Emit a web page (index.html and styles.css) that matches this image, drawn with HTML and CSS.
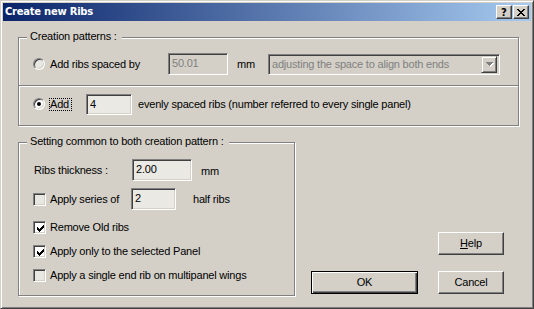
FILE: index.html
```html
<!DOCTYPE html>
<html>
<head>
<meta charset="utf-8">
<link rel="stylesheet" href="styles.css">
</head>
<body>
<div class="window">
  <div class="titlebar">
    <span class="title">Create new Ribs</span>
    <span class="cbtn help-cb">?</span>
    <span class="cbtn close-cb">
      <svg width="8" height="7" viewBox="0 0 8 7" shape-rendering="crispEdges"><path d="M0 0h2v1h-2z M6 0h2v1h-2z M1 1h2v1h-2z M5 1h2v1h-2z M2 2h4v1h-4z M3 3h2v1h-2z M2 4h4v1h-4z M1 5h2v1h-2z M5 5h2v1h-2z M0 6h2v1h-2z M6 6h2v1h-2z" fill="#000"/></svg>
    </span>
  </div>
  <div class="body">
    <div class="group g1">
      <div class="legend">Creation patterns :</div>
      <div class="row r1">
        <span class="radio"></span>
        <span class="lbl lbl-spaced">Add ribs spaced by</span>
        <span class="edit disabled e-spacing">50.01</span>
        <span class="lbl mm1">mm</span>
        <span class="combo">
          <span class="combo-text">adjusting the space to align both ends</span>
          <span class="drop">
            <svg width="8" height="5" viewBox="0 0 8 5" shape-rendering="crispEdges"><path d="M1 1h7v1h-7z M2 2h5v1h-5z M3 3h3v1h-3z M4 4h1v1h-1z" fill="#fff"/><path d="M0 0h7v1h-7z M1 1h5v1h-5z M2 2h3v1h-3z M3 3h1v1h-1z" fill="#808080"/></svg>
          </span>
        </span>
      </div>
      <div class="sep"></div>
      <div class="row r2">
        <span class="radio on"><span class="dot"></span></span>
        <span class="focus">Add</span>
        <span class="edit e-count">4</span>
        <span class="lbl evenly">evenly spaced ribs (number referred to every single panel)</span>
      </div>
    </div>
    <div class="lower">
      <div class="group g2">
        <div class="legend">Setting common to both creation pattern :</div>
        <div class="row rt">
          <span class="lbl lbl-thick">Ribs thickness :</span>
          <span class="edit e-thick">2.00</span>
          <span class="lbl mm2">mm</span>
        </div>
        <div class="row rs">
          <span class="check"></span>
          <span class="lbl lbl-series">Apply series of</span>
          <span class="edit e-series">2</span>
          <span class="lbl half">half ribs</span>
        </div>
        <div class="row ck first">
          <span class="check on"><svg width="7" height="7" viewBox="0 0 7 7" shape-rendering="crispEdges"><path d="M6 0h1v1h-1z M5 1h2v1h-2z M0 2h1v1h-1z M4 2h3v1h-3z M0 3h2v1h-2z M3 3h3v1h-3z M0 4h5v1h-5z M1 5h3v1h-3z M2 6h1v1h-1z" fill="#000"/></svg></span>
          <span class="lbl">Remove Old ribs</span>
        </div>
        <div class="row ck">
          <span class="check on"><svg width="7" height="7" viewBox="0 0 7 7" shape-rendering="crispEdges"><path d="M6 0h1v1h-1z M5 1h2v1h-2z M0 2h1v1h-1z M4 2h3v1h-3z M0 3h2v1h-2z M3 3h3v1h-3z M0 4h5v1h-5z M1 5h3v1h-3z M2 6h1v1h-1z" fill="#000"/></svg></span>
          <span class="lbl">Apply only to the selected Panel</span>
        </div>
        <div class="row ck">
          <span class="check"></span>
          <span class="lbl">Apply a single end rib on multipanel wings</span>
        </div>
      </div>
      <div class="btns">
        <span class="btn btn-help"><u>H</u>elp</span>
        <span class="btn btn-ok default">OK</span>
        <span class="btn btn-cancel">Cancel</span>
      </div>
    </div>
  </div>
</div>
</body>
</html>
```
FILE: styles.css
```css
* { box-sizing: border-box; }
html, body { margin: 0; padding: 0; }
body {
  width: 534px;
  height: 309px;
  overflow: hidden;
  background: #d4d0c8;
  font-family: "Liberation Sans", Arial, sans-serif;
  font-size: 11px;
  letter-spacing: -0.2px;
  color: #000;
}

.window {
  width: 534px;
  height: 309px;
  background: #d4d0c8;
  border: 1px solid;
  border-color: #d4d0c8 #404040 #404040 #d4d0c8;
  padding: 2px;
  box-shadow: inset 1px 1px #fff, inset -1px -1px #808080;
}

.titlebar {
  height: 18px;
  display: flex;
  align-items: center;
  padding: 0 2px 0 2px;
  background: linear-gradient(90deg, #0a246a 0%, #a6caf0 100%);
}
.title {
  flex: 1;
  color: #fff;
  font-family: "DejaVu Sans", Tahoma, sans-serif;
  font-weight: bold;
  font-size: 10px;
  letter-spacing: -0.25px;
  line-height: 18px;
}
.cbtn {
  width: 16px;
  height: 14px;
  flex: none;
  display: flex;
  align-items: center;
  justify-content: center;
  background: #d4d0c8;
  border: 1px solid;
  border-color: #fff #404040 #404040 #fff;
  box-shadow: inset -1px -1px #808080;
}
.help-cb {
  margin-right: 1px;
  font-family: "DejaVu Sans", sans-serif;
  font-weight: bold;
  font-size: 10px;
  letter-spacing: 0;
  line-height: 12px;
  padding-top: 1px;
}
.close-cb svg { display: block; }

.body { padding: 16px 0 0 15px; }

.group {
  border: 1px solid #808080;
  box-shadow: inset 1px 1px #fff, 1px 1px #fff;
}
.legend {
  display: table;
  margin: -8px 0 0 8px;
  padding: 0 5px 0 3px;
  height: 13px;
  line-height: 13px;
  background: #d4d0c8;
}

.g1 { width: 501px; height: 89px; }
.row { display: flex; align-items: center; }
.lbl { white-space: nowrap; flex: none; line-height: 13px; }

.r1 { height: 42px; padding-left: 14px; }
.r2 { height: 34px; padding-left: 14px; }
.sep {
  height: 2px;
  border-top: 1px solid #808080;
  border-bottom: 1px solid #fff;
}

.radio {
  width: 12px;
  height: 12px;
  flex: none;
  border-radius: 50%;
  border: 1px solid;
  border-color: #808080 #fff #fff #808080;
  box-shadow: inset 1px 1px #404040, inset -1px -1px #d4d0c8;
  background: #fff;
  margin-right: 5px;
  display: flex;
  align-items: center;
  justify-content: center;
}
.r1 .radio { background: #e9e7e2; }
.dot { width: 4px; height: 4px; border-radius: 50%; background: #000; }
.r2 .radio { margin-right: 4px; }

.lbl-spaced { width: 118px; }
.edit {
  flex: none;
  height: 22px;
  border: 1px solid;
  border-color: #808080 #fff #fff #808080;
  box-shadow: inset 1px 1px #404040, inset -1px -1px #d4d0c8;
  background: #ebe9e4;
  padding: 2px 2px 0 3px;
  line-height: 14px;
  white-space: nowrap;
}
.edit.disabled { background: #d4d0c8; color: #808080; }
.e-spacing { width: 60px; }
.mm1 { margin-left: 9px; width: 31px; padding-top: 1px; }

.combo {
  width: 232px;
  height: 21px;
  flex: none;
  display: flex;
  align-items: center;
  border: 1px solid;
  border-color: #808080 #fff #fff #808080;
  box-shadow: inset 1px 1px #404040, inset -1px -1px #d4d0c8;
  background: #d4d0c8;
  padding: 2px 2px 2px 3px;
}
.combo-text { flex: 1; color: #808080; white-space: nowrap; line-height: 13px; }
.drop {
  width: 16px;
  height: 17px;
  flex: none;
  display: flex;
  align-items: center;
  justify-content: center;
  border: 1px solid;
  border-color: #d4d0c8 #404040 #404040 #d4d0c8;
  box-shadow: inset 1px 1px #fff, inset -1px -1px #808080;
  background: #d4d0c8;
}
.drop svg { display: block; margin-left: 1px; }

.focus {
  flex: none;
  width: 23px;
  border: 1px dotted #000;
  padding: 0 0 0 0;
  line-height: 11px;
}
.e-count { width: 46px; height: 21px; margin-left: 14px; }
.evenly { margin-left: 6px; }

.lower { display: flex; margin-top: 16px; align-items: flex-start; }
.g2 { width: 277px; height: 154px; flex: none; }

.rt { height: 22px; margin-top: 11px; padding-left: 15px; }
.lbl-thick { width: 98px; }
.e-thick { width: 60px; }
.mm2 { margin-left: 9px; padding-top: 3px; }

.rs { height: 22px; margin-top: 7px; padding-left: 14px; }
.lbl-series { width: 81px; }
.e-series { width: 45px; }
.half { margin-left: 17px; }

.ck { height: 24px; padding-left: 14px; }
.ck.first { margin-top: 5px; }

.check {
  width: 13px;
  height: 13px;
  flex: none;
  border: 1px solid;
  border-color: #808080 #fff #fff #808080;
  box-shadow: inset 1px 1px #404040, inset -1px -1px #d4d0c8;
  background: #e9e7e2;
  margin-right: 4px;
  padding: 2px 0 0 2px;
}
.check.on { background: #fff; }
.check svg { display: block; margin: 1px 0 0 1px; }

.btns {
  display: grid;
  grid-template-columns: 107px 66px;
  grid-template-rows: 23px 23px;
  column-gap: 20px;
  row-gap: 16px;
  margin: 90px 0 0 16px;
}
.btn {
  display: flex;
  align-items: center;
  justify-content: center;
  background: #d4d0c8;
  border: 1px solid;
  border-color: #fff #404040 #404040 #fff;
  box-shadow: inset -1px -1px #808080;
  line-height: 13px;
}
.btn-help { grid-column: 2; grid-row: 1; }
.btn-ok { grid-column: 1; grid-row: 2; }
.btn-cancel { grid-column: 2; grid-row: 2; }
.btn.default {
  border: 1px solid #000;
  box-shadow: inset 1px 1px #fff, inset -1px -1px #404040, inset -2px -2px #808080;
}
```
